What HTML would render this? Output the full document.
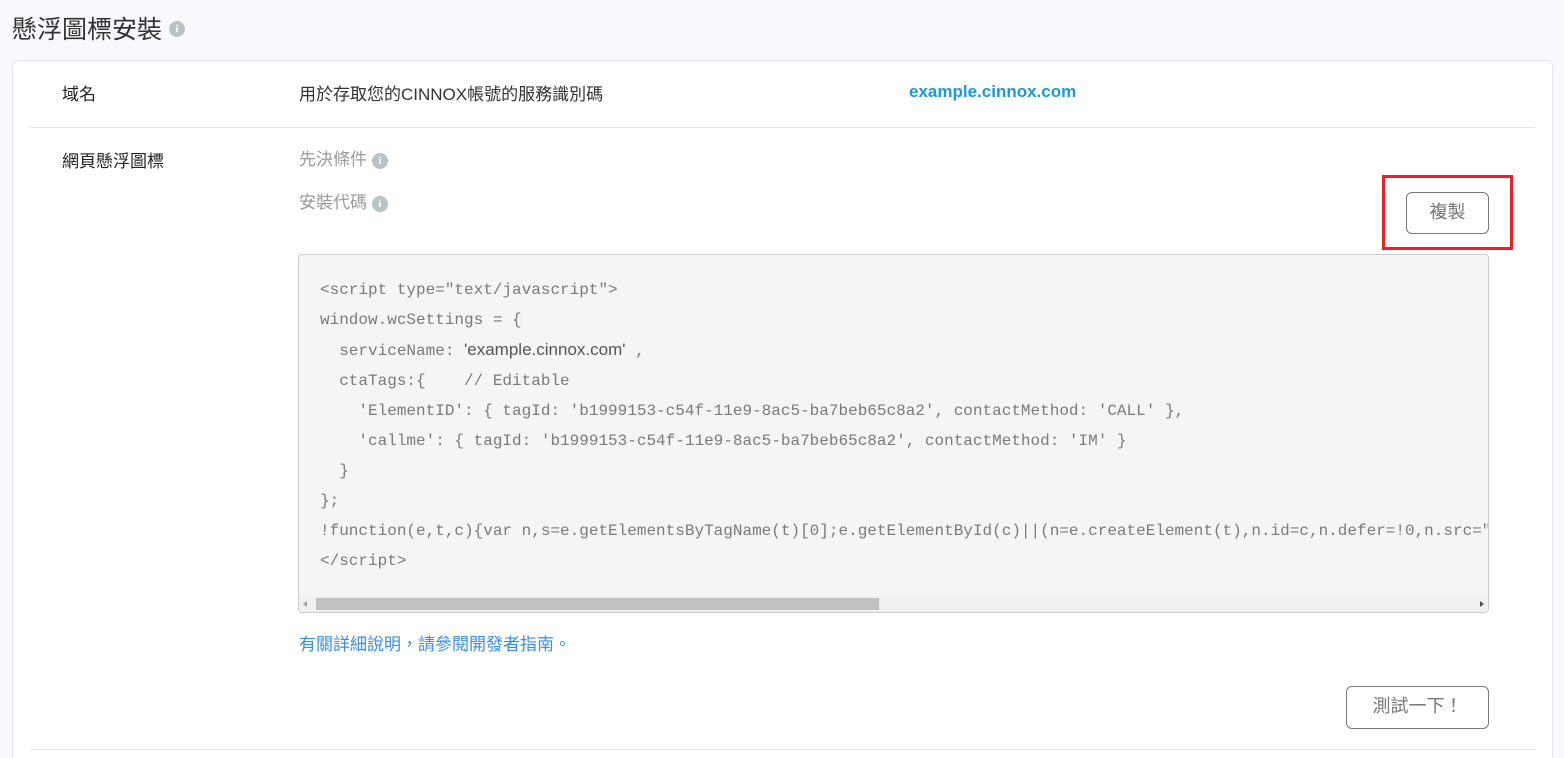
<!DOCTYPE html>
<html style="height:758px;overflow:hidden"><head><meta charset="utf-8"><style>
body{margin:0;width:1564px;height:758px;overflow:hidden;background:#f8f9fc;font-family:"Liberation Sans","Noto Sans CJK TC",sans-serif;color:#222;position:relative}
.a{position:absolute;white-space:nowrap}
.info{display:inline-block;width:16px;height:16px;border-radius:50%;background:#b9c2c7;color:#fff;font-size:11px;font-weight:bold;text-align:center;line-height:16px;vertical-align:middle;font-family:"Liberation Serif",serif}
.card{position:absolute;left:12px;top:60px;width:1541px;height:698px;background:#fff;border:1px solid #e3e5e8;border-bottom:0;border-radius:6px 6px 0 0;box-sizing:border-box}
.hr{position:absolute;height:1px;background:#e6e6e6;left:30px;width:1505px}
.btn{position:absolute;border:1px solid #777;border-radius:6px;background:#fff;color:#777;font-size:18px;text-align:center;box-sizing:border-box}
.code{position:absolute;left:298px;top:254px;width:1191px;height:359px;background:#f5f5f5;border:1px solid #ccc;border-radius:4px;box-sizing:border-box;overflow:hidden}
.code pre{margin:0;position:absolute;left:21px;top:20px;font-family:"Liberation Mono",monospace;font-size:16px;line-height:30px;color:#7a7a7a}
.sb{position:absolute;left:0;right:0;bottom:0;height:16px;background:#f0f0f0}
</style></head><body>
<div class="a" style="left:12px;top:10px;font-size:25px;color:#333">懸浮圖標安裝 <span class="info" style="position:relative;top:-2px">i</span></div>
<div class="card"></div>
<div class="a" style="left:62px;top:80px;font-size:17px">域名</div>
<div class="a" style="left:299px;top:80px;font-size:17px;color:#333">用於存取您的CINNOX帳號的服務識別碼</div>
<div class="a" style="left:909px;top:82px;font-size:17px;font-weight:bold;color:#1a9ad6">example.cinnox.com</div>
<div class="hr" style="top:127px"></div>
<div class="a" style="left:62px;top:147px;font-size:17px">網頁懸浮圖標</div>
<div class="a" style="left:299px;top:145px;font-size:17px;color:#9a9a9a">先決條件 <span class="info">i</span></div>
<div class="a" style="left:299px;top:188px;font-size:17px;color:#9a9a9a">安裝代碼 <span class="info">i</span></div>
<div style="position:absolute;left:1382px;top:175px;width:131px;height:75px;border:3px solid #e8202a;box-sizing:border-box"></div>
<div class="btn" style="left:1406px;top:192px;width:83px;height:42px;line-height:38px">複製</div>
<div class="code"><pre>&lt;script type="text/javascript"&gt;
window.wcSettings = {
  serviceName: <span style="font-family:'Liberation Sans',sans-serif;font-size:17px;color:#555">'example.cinnox.com'</span> ,
  ctaTags:{    // Editable
    'ElementID': { tagId: 'b1999153-c54f-11e9-8ac5-ba7beb65c8a2', contactMethod: 'CALL' },
    'callme': { tagId: 'b1999153-c54f-11e9-8ac5-ba7beb65c8a2', contactMethod: 'IM' }
  }
};
!function(e,t,c){var n,s=e.getElementsByTagName(t)[0];e.getElementById(c)||(n=e.createElement(t),n.id=c,n.defer=!0,n.src="
&lt;/script&gt;</pre>
<div class="sb"><div style="position:absolute;left:17px;top:2px;width:563px;height:12px;background:#c1c1c1"></div>
<div style="position:absolute;left:4px;top:5px;border:3px solid transparent;border-right:4px solid #a0a0a0;border-left:0"></div>
<div style="position:absolute;right:4px;top:5px;border:3px solid transparent;border-left:4px solid #505050;border-right:0"></div></div></div>
<div class="a" style="left:299px;top:630px;font-size:17px;color:#3a8ee6">有關詳細說明，請參閱開發者指南。</div>
<div class="btn" style="left:1346px;top:686px;width:143px;height:43px;line-height:38px">測試一下！</div>
<div class="hr" style="top:749px"></div>
</body></html>
